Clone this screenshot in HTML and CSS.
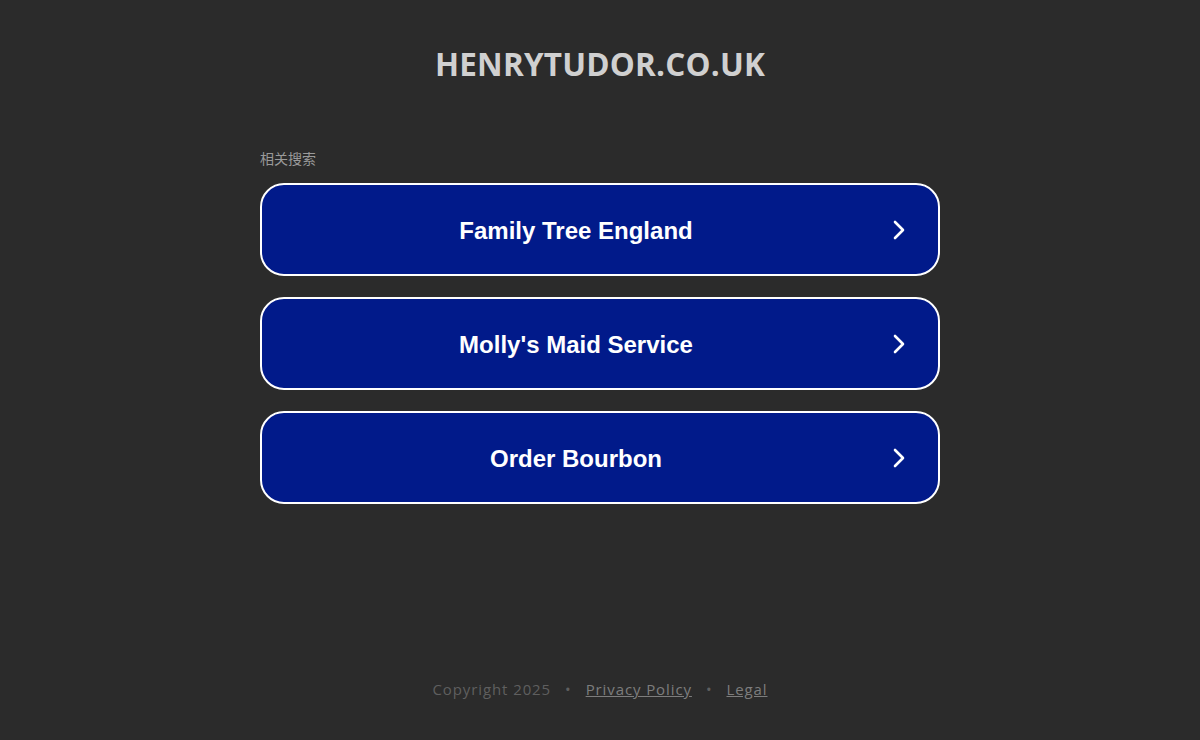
FILE: index.html
```html
<!DOCTYPE html>
<html lang="en">
<head>
<meta charset="utf-8">
<title>henrytudor.co.uk</title>
<link rel="stylesheet" href="styles.css">
</head>
<body>
<div class="page">
  <header class="header">
    <h1 class="domain">HENRYTUDOR.CO.UK</h1>
  </header>
  <main class="main">
    <div class="related">
      <div class="label">相关搜索</div>
      <a class="btn" href="#"><span class="btn-text">Family Tree England</span><svg class="chev" viewBox="0 0 24 24" width="24" height="24"><path d="M8 4l8 8-8 8" fill="none" stroke="#fff" stroke-width="2.6" stroke-linecap="round" stroke-linejoin="round"/></svg></a>
      <a class="btn" href="#"><span class="btn-text">Molly's Maid Service</span><svg class="chev" viewBox="0 0 24 24" width="24" height="24"><path d="M8 4l8 8-8 8" fill="none" stroke="#fff" stroke-width="2.6" stroke-linecap="round" stroke-linejoin="round"/></svg></a>
      <a class="btn" href="#"><span class="btn-text">Order Bourbon</span><svg class="chev" viewBox="0 0 24 24" width="24" height="24"><path d="M8 4l8 8-8 8" fill="none" stroke="#fff" stroke-width="2.6" stroke-linecap="round" stroke-linejoin="round"/></svg></a>
    </div>
  </main>
  <footer class="footer">
    <span class="copy">Copyright 2025</span>
    <span class="dot">•</span>
    <a class="flink" href="#">Privacy Policy</a>
    <span class="dot">•</span>
    <a class="flink" href="#">Legal</a>
  </footer>
</div>
</body>
</html>
```
FILE: styles.css
```css
html, body {
  margin: 0;
  padding: 0;
  background: #2b2b2b;
}
.page {
  width: 1200px;
  height: 740px;
  display: flex;
  flex-direction: column;
  align-items: center;
}
.header {
  padding-top: 43px;
}
.domain {
  margin: 0;
  font-family: "Open Sans", "DejaVu Sans", sans-serif;
  font-weight: 700;
  font-size: 31.5px;
  line-height: 42px;
  color: #d0d0d0;
  letter-spacing: 0.2px;
}
.main {
  padding-top: 63px;
  width: 680px;
}
.related {
  display: flex;
  flex-direction: column;
  gap: 21px;
}
.label {
  font-family: "Noto Sans CJK SC", sans-serif;
  font-size: 14px;
  line-height: 20px;
  color: #9a9a9a;
  margin-bottom: -6px;
  margin-top: 0;
}
.btn {
  position: relative;
  display: flex;
  align-items: center;
  justify-content: center;
  box-sizing: border-box;
  height: 93px;
  padding-top: 2px;
  border: 2px solid #ffffff;
  border-radius: 24px;
  background: #011a8a;
  text-decoration: none;
}
.btn-text {
  font-family: "Liberation Sans", Arial, sans-serif;
  font-weight: 700;
  font-size: 24px;
  color: #ffffff;
  margin-right: 48px;
}
.chev {
  position: absolute;
  right: 27px;
  top: 50%;
  margin-top: -12px;
}
.footer {
  margin-top: auto;
  padding-bottom: 41px;
  font-family: "Open Sans", "DejaVu Sans", sans-serif;
  font-size: 15px;
  color: #5f5f5f;
  letter-spacing: 0.9px;
  display: flex;
  gap: 14px;
}
.flink {
  color: #7d7d7d;
  text-decoration: underline;
}
.dot {
  color: #5f5f5f;
}
```
